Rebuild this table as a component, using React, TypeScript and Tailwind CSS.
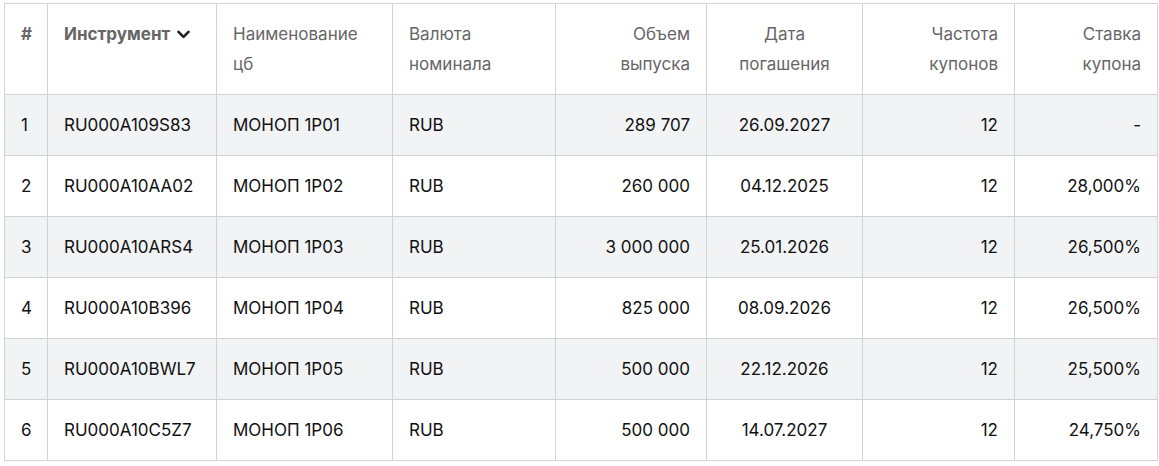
import React from "react";

const rows = [
  ["1", "RU000A109S83", "МОНОП 1P01", "RUB", "289 707", "26.09.2027", "12", "-"],
  ["2", "RU000A10AA02", "МОНОП 1P02", "RUB", "260 000", "04.12.2025", "12", "28,000%"],
  ["3", "RU000A10ARS4", "МОНОП 1P03", "RUB", "3 000 000", "25.01.2026", "12", "26,500%"],
  ["4", "RU000A10B396", "МОНОП 1P04", "RUB", "825 000", "08.09.2026", "12", "26,500%"],
  ["5", "RU000A10BWL7", "МОНОП 1P05", "RUB", "500 000", "22.12.2026", "12", "25,500%"],
  ["6", "RU000A10C5Z7", "МОНОП 1P06", "RUB", "500 000", "14.07.2027", "12", "24,750%"],
];

const widths = [43, 169, 176, 163, 151, 156, 152, 143];
const align = ["left", "left", "left", "left", "right", "center", "right", "right"];

function alignCls(i: number) {
  return align[i] === "right" ? "text-right" : align[i] === "center" ? "text-center" : "text-left";
}

export default function App() {
  return (
    <div className="bg-white w-[1159px] h-[466px] pl-[4px] pt-[3px]" style={{ fontFamily: "Inter, 'Noto Sans', sans-serif" }}>
      <table className="border-collapse table-fixed w-[1153px] text-[17px]">
        <colgroup>
          {widths.map((w, i) => (
            <col key={i} style={{ width: w }} />
          ))}
        </colgroup>
        <thead>
          <tr>
            <th className="border border-[#d3d3d3] px-[16px] py-[15px] align-top text-left leading-[30px] font-bold text-[#666]">#</th>
            <th className="border border-[#d3d3d3] px-[16px] py-[15px] align-top text-left leading-[30px] font-bold text-[#666]">
              <span className="inline-flex items-center gap-[7px]">
                Инструмент
                <svg width="13" height="9" viewBox="0 0 13 9" className="mt-[1px]">
                  <path d="M1.5 1.8 L6.5 6.8 L11.5 1.8" stroke="#222" strokeWidth="2.6" fill="none" strokeLinecap="round" strokeLinejoin="round" />
                </svg>
              </span>
            </th>
            <th className="border border-[#d3d3d3] px-[16px] py-[15px] align-top text-left leading-[30px] font-normal text-[#666]">Наименование<br />цб</th>
            <th className="border border-[#d3d3d3] px-[16px] py-[15px] align-top text-left leading-[30px] font-normal text-[#666]">Валюта<br />номинала</th>
            <th className="border border-[#d3d3d3] px-[16px] py-[15px] align-top text-right leading-[30px] font-normal text-[#666]">Объем<br />выпуска</th>
            <th className="border border-[#d3d3d3] px-[16px] py-[15px] align-top text-center leading-[30px] font-normal text-[#666]">Дата<br />погашения</th>
            <th className="border border-[#d3d3d3] px-[16px] py-[15px] align-top text-right leading-[30px] font-normal text-[#666]">Частота<br />купонов</th>
            <th className="border border-[#d3d3d3] px-[16px] py-[15px] align-top text-right leading-[30px] font-normal text-[#666]">Ставка<br />купона</th>
          </tr>
        </thead>
        <tbody>
          {rows.map((r, ri) => (
            <tr key={ri} className={ri % 2 === 0 ? "bg-[#f2f3f5]" : "bg-white"}>
              {r.map((c, ci) => (
                <td
                  key={ci}
                  className={`border border-[#d3d3d3] px-[16px] py-[16px] leading-[28px] text-[#111] whitespace-nowrap ${alignCls(ci)}`}
                >
                  {c}
                </td>
              ))}
            </tr>
          ))}
        </tbody>
      </table>
    </div>
  );
}
